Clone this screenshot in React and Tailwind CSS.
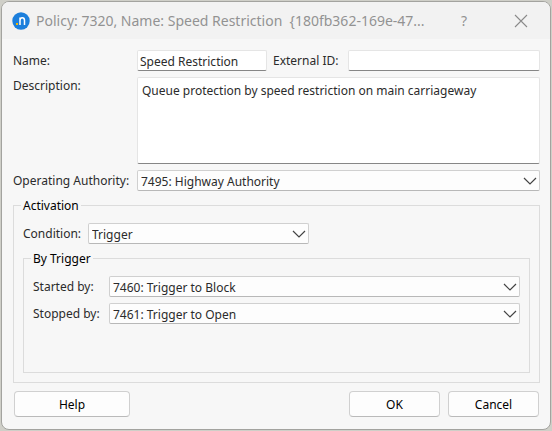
import { useState } from "react";

const fieldStyle = "h-[21px] min-w-0 rounded-[2px] border border-[#e5e5e5] border-b-[#868686] bg-white px-[2px] pt-px outline-none";
const labelStyle = "pt-px";
const groupStyle = "min-w-0 border border-[#dcdcdc] px-[9px]";
const legendStyle = "-ml-[2px] h-4 px-[2px] leading-[18px] text-black";
const buttonStyle = "h-[26px] rounded-[4px] border border-[#d0d0d0] border-b-[#bababa] bg-[#fdfdfd] pt-px text-center text-black";

function Select({ id, options, className = "" }) {
  return (
    <div className={"relative min-w-0 " + className}>
      <select id={id} className="block h-[21px] w-full appearance-none rounded-[2px] border border-[#d0d0d0] border-b-[#b8b8b8] bg-[#fdfdfd] pt-[2px] pr-6 pl-[3px] outline-none">
        {options.map((option) => <option key={option}>{option}</option>)}
      </select>
      <svg className="pointer-events-none absolute top-[7px] right-[3px] h-2 w-[14px]" viewBox="0 0 14 8" fill="none" stroke="#444" strokeWidth="1.2">
        <path d="M1 1l6 6 6-6" />
      </svg>
    </div>
  );
}

function TitleBar() {
  return (
    <header className="flex h-[37px] items-center bg-[#f2f2f2] pr-[22px] pl-[10px] text-[#929292]">
      <svg className="h-[18px] w-[18px] shrink-0" viewBox="0 0 18 18">
        <circle cx="9" cy="9" r="8.7" fill="#1c7fdc" />
        <rect x="4" y="11" width="2" height="2" fill="#f5b800" />
        <path d="M8 13V5.5M8 8.5C8 6.5 9 5.8 10.3 5.8S12.5 6.5 12.5 8.5V13" fill="none" stroke="#fff" strokeWidth="1.5" />
      </svg>
      <h1 className="ml-[6px] flex-1 overflow-hidden text-[14px] leading-5 whitespace-pre">
        {"Policy: 7320, Name: Speed Restriction  {180fb362-169e-47..."}
      </h1>
      <button type="button" aria-label="What's this" className="mr-[42px] w-4 text-[14px] leading-5">?</button>
      <button type="button" aria-label="Close">
        <svg className="h-[14px] w-[14px]" viewBox="0 0 14 14" stroke="#8a8a8a" strokeWidth="1.1">
          <path d="M1 1l12 12M13 1L1 13" />
        </svg>
      </button>
    </header>
  );
}

function App() {
  const [name, setName] = useState("Speed Restriction");
  const [externalId, setExternalId] = useState("");
  const [description, setDescription] = useState("Queue protection by speed restriction on main carriageway");

  return (
    <div className="flex min-h-screen bg-[#cfcfc8] p-px font-['Noto_Sans',sans-serif] text-[12px] leading-4 text-[#2b2b2b]">
      <form className="flex flex-1 flex-col overflow-hidden rounded-[8px] border border-[#a3a39f] bg-[#f7f7f7]" onSubmit={(event) => event.preventDefault()}>
        <TitleBar />

        <div className="flex flex-1 flex-col pt-[11px] pr-[10px] pb-[12px] pl-[11px]">
          <div className="grid grid-cols-[124px_1fr] gap-y-[6px]">
            <label htmlFor="name" className={labelStyle + " self-center"}>Name:</label>
            <div className="flex items-center">
              <input id="name" type="text" className={fieldStyle + " w-[130px]"} value={name} onChange={(event) => setName(event.target.value)} />
              <label htmlFor="externalId" className={labelStyle + " w-[81px] shrink-0 pl-[6px] whitespace-nowrap"}>External ID:</label>
              <input id="externalId" type="text" className={fieldStyle + " flex-1"} value={externalId} onChange={(event) => setExternalId(event.target.value)} />
            </div>

            <label htmlFor="description" className={labelStyle}>Description:</label>
            <textarea
              id="description"
              className="block h-[87px] resize-none rounded-[2px] border border-[#e5e5e5] border-b-[#868686] bg-white px-1 py-[5px] outline-none"
              value={description}
              onChange={(event) => setDescription(event.target.value)}
            />

            <label htmlFor="authority" className={labelStyle + " self-center"}>Operating Authority:</label>
            <Select id="authority" options={["7495: Highway Authority"]} />
          </div>

          <fieldset className={groupStyle + " mt-[6px] pb-[9px]"}>
            <legend className={legendStyle}>Activation</legend>
            <div className="mt-[10px] flex items-center">
              <label htmlFor="condition" className={labelStyle + " w-[65px]"}>Condition:</label>
              <Select id="condition" className="w-[221px]" options={["Trigger"]} />
            </div>

            <fieldset className={groupStyle + " mt-[6px] pb-12"}>
              <legend className={legendStyle}>By Trigger</legend>
              <div className="mt-[10px] grid grid-cols-[76px_1fr] items-center gap-y-[6px]">
                <label htmlFor="startedBy" className={labelStyle}>Started by:</label>
                <Select id="startedBy" options={["7460: Trigger to Block"]} />
                <label htmlFor="stoppedBy" className={labelStyle}>Stopped by:</label>
                <Select id="stoppedBy" options={["7461: Trigger to Open"]} />
              </div>
            </fieldset>
          </fieldset>

          <div className="mt-2 flex gap-2 px-px">
            <button type="button" className={buttonStyle + " mr-auto w-[116px]"}>Help</button>
            <button type="submit" className={buttonStyle + " w-[91px]"}>OK</button>
            <button type="button" className={buttonStyle + " w-[91px]"}>Cancel</button>
          </div>
        </div>
      </form>
    </div>
  );
}

export default App;
